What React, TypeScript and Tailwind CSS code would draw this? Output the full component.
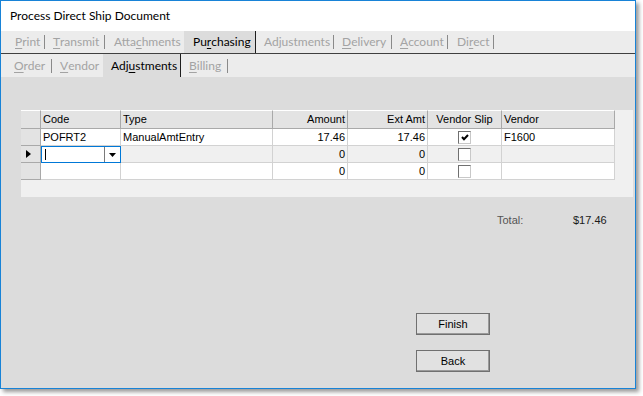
import React from 'react'

type TabDef = {
  label: React.ReactNode
  w: string
  pl: string
  sep?: 'light' | 'dark' | 'none'
  selected?: boolean
}

const u = (s: string) => <span className="underline underline-offset-[2px]">{s}</span>

const topTabs: TabDef[] = [
  { label: <>{u('P')}rint</>, w: 'w-[43px]', pl: 'pl-[14px]', sep: 'light' },
  { label: <>{u('T')}ransmit</>, w: 'w-[59px]', pl: 'pl-[8px]', sep: 'light' },
  { label: <>Atta{u('c')}hments</>, w: 'w-[79px]', pl: 'pl-[9px]', sep: 'none' },
  { label: <>Pu{u('r')}chasing</>, w: 'w-[71px]', pl: 'pl-[9px]', sep: 'dark', selected: true },
  { label: <>Adjustments</>, w: 'w-[77px]', pl: 'pl-[8px]', sep: 'light' },
  { label: <>{u('D')}elivery</>, w: 'w-[57px]', pl: 'pl-[8px]', sep: 'light' },
  { label: <>{u('A')}ccount</>, w: 'w-[55px]', pl: 'pl-[8px]', sep: 'light' },
  { label: <>Di{u('r')}ect</>, w: 'w-[45px]', pl: 'pl-[9px]', sep: 'light' },
]

const subTabs: TabDef[] = [
  { label: <>{u('O')}rder</>, w: 'w-[50px]', pl: 'pl-[13px]', sep: 'light' },
  { label: <>{u('V')}endor</>, w: 'w-[51px]', pl: 'pl-[8px]', sep: 'none' },
  { label: <>Adj{u('u')}stments</>, w: 'w-[77px]', pl: 'pl-[8px]', sep: 'dark', selected: true },
  { label: <>{u('B')}illing</>, w: 'w-[46px]', pl: 'pl-[8px]', sep: 'light' },
]

function TabRow({ tabs, h }: { tabs: TabDef[]; h: string }) {
  return (
    <div className={`flex ${h} bg-[#ececec] items-stretch`}>
      {tabs.map((t, i) => (
        <React.Fragment key={i}>
          <div
            className={`${t.w} ${t.pl} flex items-center shrink-0 whitespace-nowrap ${
              t.selected ? 'bg-[#dcdcdc] text-black' : 'text-[#a3a3a3]'
            }`}
          >
            {t.label}
          </div>
          {t.sep === 'light' && <div className="w-px h-[14px] self-center bg-[#8a8a8a] shrink-0" />}
          {t.sep === 'dark' && <div className="w-px bg-[#1e1e1e] shrink-0" />}
        </React.Fragment>
      ))}
    </div>
  )
}

const cols = ['w-[20px]', 'w-[80px]', 'w-[152px]', 'w-[75px]', 'w-[80px]', 'w-[74px]', 'w-[113px]']
const heads = ['', 'Code', 'Type', 'Amount', 'Ext Amt', 'Vendor Slip', 'Vendor']
const headAlign = ['', 'justify-start pl-[2px]', 'justify-start pl-[2px]', 'justify-end pr-[2px]', 'justify-end pr-[2px]', 'justify-center', 'justify-start pl-[2px]']

function CheckBox({ checked }: { checked?: boolean }) {
  return (
    <div className="w-[13px] h-[13px] bg-white border border-[#c8c8c8] border-t-[#707070] border-l-[#707070] flex items-center justify-center">
      {checked && (
        <svg width="8" height="7" viewBox="0 0 8 7">
          <path d="M1 3 L3 5.2 L7 1" fill="none" stroke="#000" strokeWidth="2" />
        </svg>
      )}
    </div>
  )
}

function RowHeader({ current }: { current?: boolean }) {
  return (
    <div className={`${cols[0]} h-full bg-[#e3e3e3] border-r border-b border-[#a9a9a9] flex items-center pl-[5px]`}>
      {current && (
        <svg width="5" height="8" viewBox="0 0 5 8">
          <polygon points="0,0 5,4 0,8" fill="#000" />
        </svg>
      )}
    </div>
  )
}

const cell = 'h-full border-r border-b border-[#d2d2d2] flex items-center shrink-0'

function Grid() {
  return (
    <div className="h-[87px] bg-[#f0f0f0] font-['Liberation_Sans',Arial,sans-serif] text-[11px] text-black">
      <div className="flex h-[19px]">
        {heads.map((h, i) => (
          <div
            key={i}
            className={`${cols[i]} h-full bg-[#e3e3e3] border-r border-b border-[#a9a9a9] border-t border-t-white flex items-center shrink-0 ${headAlign[i]}`}
          >
            {h}
          </div>
        ))}
      </div>
      {/* row 1 */}
      <div className="flex h-[17px]">
        <RowHeader />
        <div className={`${cols[1]} ${cell} bg-white pl-[2px]`}>POFRT2</div>
        <div className={`${cols[2]} ${cell} bg-white pl-[2px]`}>ManualAmtEntry</div>
        <div className={`${cols[3]} ${cell} bg-white justify-end pr-[2px]`}>17.46</div>
        <div className={`${cols[4]} ${cell} bg-white justify-end pr-[2px]`}>17.46</div>
        <div className={`${cols[5]} ${cell} bg-white justify-center`}>
          <CheckBox checked />
        </div>
        <div className={`${cols[6]} ${cell} bg-white pl-[2px]`}>F1600</div>
      </div>
      {/* row 2 (editing) */}
      <div className="flex h-[17px]">
        <RowHeader current />
        <div className={`${cols[1]} h-full shrink-0 bg-white border border-[#0078d7] flex items-stretch`}>
          <div className="flex-1 flex items-center pl-[3px]">
            <div className="w-px h-[11px] bg-black" />
          </div>
          <div className="w-[16px] border-l border-[#7a7a7a] flex items-center justify-center">
            <svg width="7" height="4" viewBox="0 0 7 4">
              <polygon points="0,0 7,0 3.5,4" fill="#000" />
            </svg>
          </div>
        </div>
        <div className={`${cols[2]} ${cell} bg-[#f0f0f0]`} />
        <div className={`${cols[3]} ${cell} bg-[#f0f0f0] justify-end pr-[2px]`}>0</div>
        <div className={`${cols[4]} ${cell} bg-[#f0f0f0] justify-end pr-[2px]`}>0</div>
        <div className={`${cols[5]} ${cell} bg-[#f0f0f0] justify-center`}>
          <CheckBox />
        </div>
        <div className={`${cols[6]} ${cell} bg-[#f0f0f0]`} />
      </div>
      {/* row 3 */}
      <div className="flex h-[17px]">
        <RowHeader />
        <div className={`${cols[1]} ${cell} bg-white`} />
        <div className={`${cols[2]} ${cell} bg-white`} />
        <div className={`${cols[3]} ${cell} bg-white justify-end pr-[2px]`}>0</div>
        <div className={`${cols[4]} ${cell} bg-white justify-end pr-[2px]`}>0</div>
        <div className={`${cols[5]} ${cell} bg-white justify-center`}>
          <CheckBox />
        </div>
        <div className={`${cols[6]} ${cell} bg-white`} />
      </div>
    </div>
  )
}

function Button({ children }: { children: React.ReactNode }) {
  return (
    <button className="w-[74px] h-[22px] bg-[#e1e1e1] border border-[#707070] shadow-[inset_-1px_-1px_0_#9a9a9a] text-black text-[11px] font-['Liberation_Sans',Arial,sans-serif] flex items-center justify-center">
      {children}
    </button>
  )
}

export default function App() {
  return (
    <div className="w-[643px] h-[396px] bg-white">
      <div className="w-[636px] h-[389px] border border-[#1883d7] bg-[#dcdcdc] shadow-[3px_3px_4px_rgba(0,0,0,0.4)] flex flex-col font-['Lato','Noto_Sans',sans-serif] text-[12px]">
        {/* Title bar */}
        <div className="h-[30px] bg-white flex items-center pl-[9px] text-black text-[12px]">
          Process Direct Ship Document
        </div>

        {/* Tabs */}
        <TabRow tabs={topTabs} h="h-[22px]" />
        <div className="h-px bg-[#404040]" />
        <TabRow tabs={subTabs} h="h-[23px]" />

        {/* Content */}
        <div className="flex-1 flex flex-col pt-[33px] pl-[20px] pr-[2px]">
          <Grid />

          <div className="mt-[16px] h-[14px] flex items-center font-['Liberation_Sans',Arial,sans-serif] text-[11px]">
            <span className="ml-[476px] w-[76px] text-[#555555]">Total:</span>
            <span className="text-[#1a1a1a]">$17.46</span>
          </div>

          <div className="ml-[395px] mt-[86px] flex flex-col gap-[15px]">
            <Button>Finish</Button>
            <Button>Back</Button>
          </div>
        </div>
      </div>
    </div>
  )
}
